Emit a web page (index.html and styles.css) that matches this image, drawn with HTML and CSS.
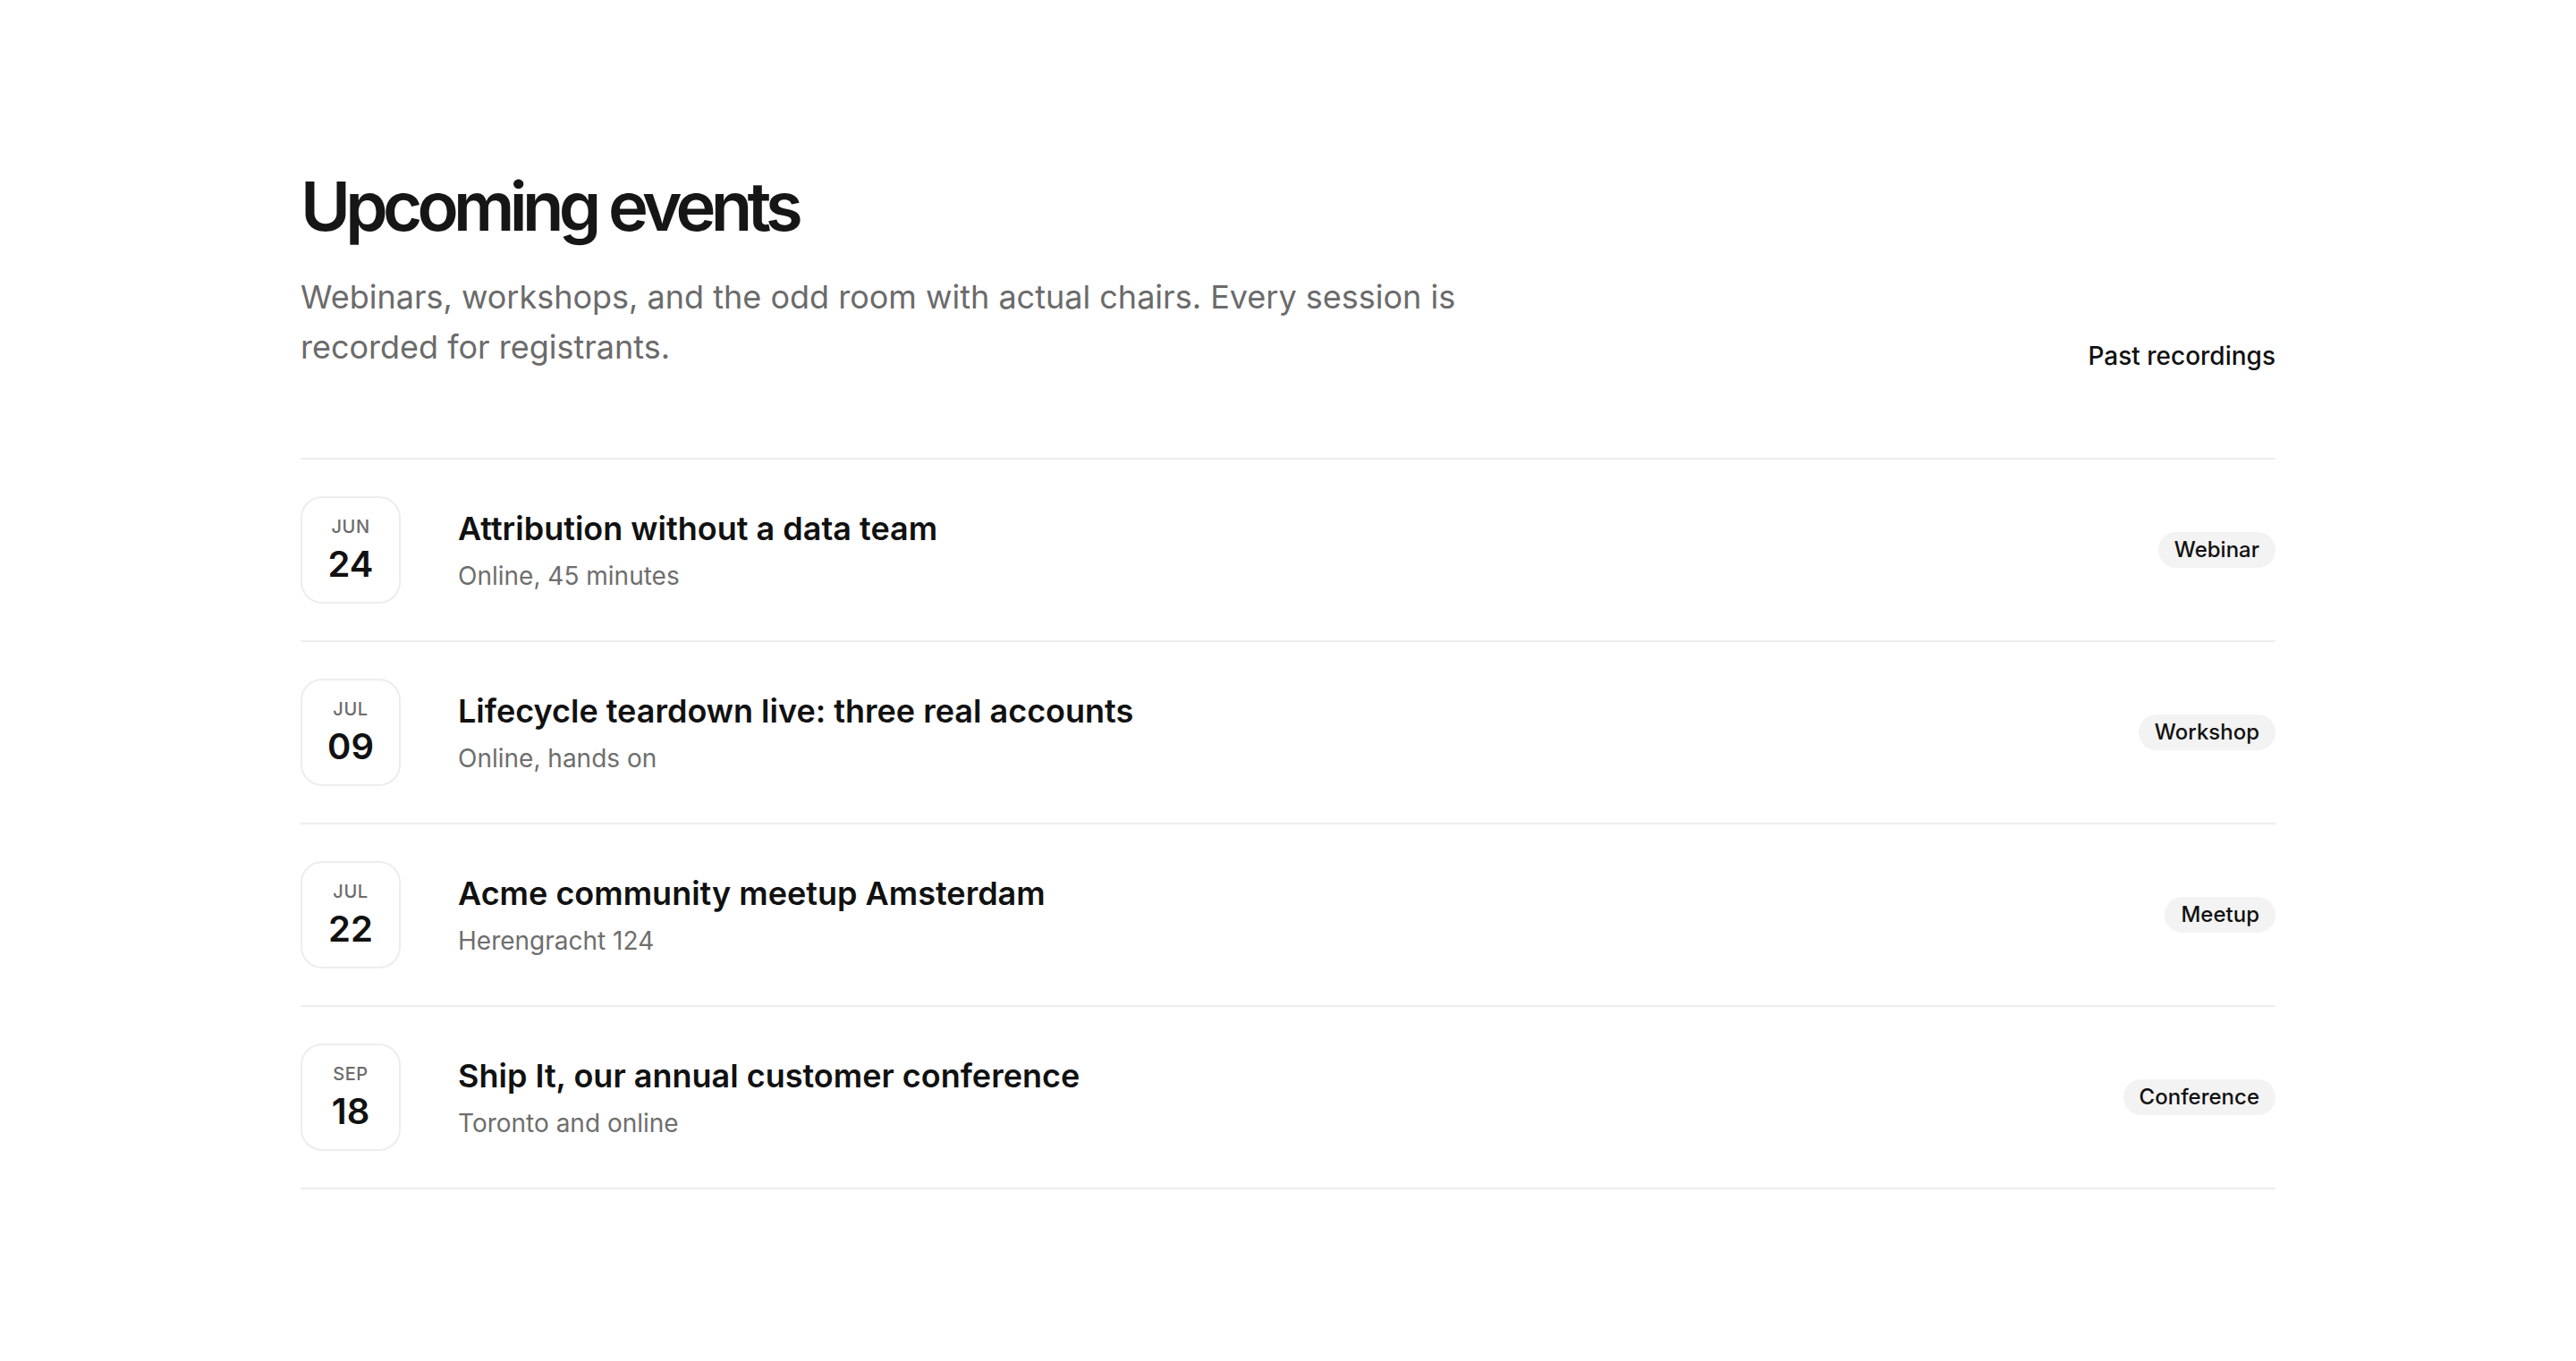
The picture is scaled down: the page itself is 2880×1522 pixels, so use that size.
FILE: index.html
```html
<!DOCTYPE html>
<html lang="en">
<head>
    <meta charset="UTF-8">
    <meta name="viewport" content="width=device-width, initial-scale=1.0">
    <title>Upcoming events</title>
    <link rel="stylesheet" href="styles.css">
</head>
<body>

    <section class="events">
        <header class="events__header">
            <div class="events__intro">
                <h1 class="events__title">Upcoming events</h1>
                <p class="events__lead">Webinars, workshops, and the odd room with actual chairs. Every session is recorded for registrants.</p>
            </div>
            <a class="events__link" href="#">Past recordings</a>
        </header>

        <ul class="events__list">
            <li class="event">
                <div class="event__date">
                    <span class="event__month">Jun</span>
                    <span class="event__day">24</span>
                </div>
                <div class="event__body">
                    <h2 class="event__title">Attribution without a data team</h2>
                    <p class="event__meta">Online, 45 minutes</p>
                </div>
                <span class="event__tag">Webinar</span>
            </li>
            <li class="event">
                <div class="event__date">
                    <span class="event__month">Jul</span>
                    <span class="event__day">09</span>
                </div>
                <div class="event__body">
                    <h2 class="event__title">Lifecycle teardown live: three real accounts</h2>
                    <p class="event__meta">Online, hands on</p>
                </div>
                <span class="event__tag">Workshop</span>
            </li>
            <li class="event">
                <div class="event__date">
                    <span class="event__month">Jul</span>
                    <span class="event__day">22</span>
                </div>
                <div class="event__body">
                    <h2 class="event__title">Acme community meetup Amsterdam</h2>
                    <p class="event__meta">Herengracht 124</p>
                </div>
                <span class="event__tag">Meetup</span>
            </li>
            <li class="event">
                <div class="event__date">
                    <span class="event__month">Sep</span>
                    <span class="event__day">18</span>
                </div>
                <div class="event__body">
                    <h2 class="event__title">Ship It, our annual customer conference</h2>
                    <p class="event__meta">Toronto and online</p>
                </div>
                <span class="event__tag">Conference</span>
            </li>
        </ul>
    </section>

</body>
</html>
```

FILE: styles.css
```css
/* Page */
body {
    margin: 0;
    background: #fff;
    color: #111;
    font-family: Inter, "Noto Sans", sans-serif;
}

/* Events block */
.events {
    max-width: 2208px;
    margin: 0 auto;
    padding: 188px 0 160px;
}

/* Header */
.events__header {
    display: flex;
    align-items: flex-end;
    justify-content: space-between;
    margin-bottom: 96px;
}

.events__title {
    margin: 0;
    font-size: 76px;
    line-height: 84px;
    font-weight: 600;
    letter-spacing: -0.075em;
    color: #161616;
}

.events__lead {
    margin: 32px 0 0;
    max-width: 1440px;
    font-size: 36px;
    line-height: 56px;
    color: #6b6b6b;
}

.events__link {
    margin-bottom: -2px;
    font-size: 28px;
    line-height: 40px;
    font-weight: 500;
    color: #111;
    text-decoration: none;
}

.events__link:hover {
    text-decoration: underline;
}

/* List */
.events__list {
    list-style: none;
    margin: 0;
    padding: 0;
    border-top: 2px solid #ededed;
}

.event {
    display: flex;
    align-items: center;
    gap: 64px;
    padding: 41px 0;
    border-bottom: 2px solid #ededed;
}

/* Date badge */
.event__date {
    flex: none;
    box-sizing: border-box;
    width: 112px;
    height: 120px;
    border: 2px solid #ededed;
    border-radius: 24px;
    display: flex;
    flex-direction: column;
    align-items: center;
    justify-content: center;
}

.event__month {
    font-size: 20px;
    line-height: 28px;
    font-weight: 500;
    text-transform: uppercase;
    letter-spacing: 0.03em;
    color: #6b6b6b;
}

.event__day {
    margin-top: 4px;
    font-size: 40px;
    line-height: 48px;
    font-weight: 600;
    color: #111;
}

/* Body */
.event__body {
    flex: 1;
}

.event__title {
    margin: 0;
    font-size: 36px;
    line-height: 48px;
    font-weight: 600;
    color: #111;
}

.event__meta {
    margin: 9px 0 0;
    font-size: 28px;
    line-height: 40px;
    color: #6e6e6e;
}

/* Tag pill */
.event__tag {
    flex: none;
    padding: 7px 18px;
    border-radius: 999px;
    background: #f3f3f3;
    font-size: 24px;
    line-height: 26px;
    font-weight: 500;
    color: #111;
}
```
